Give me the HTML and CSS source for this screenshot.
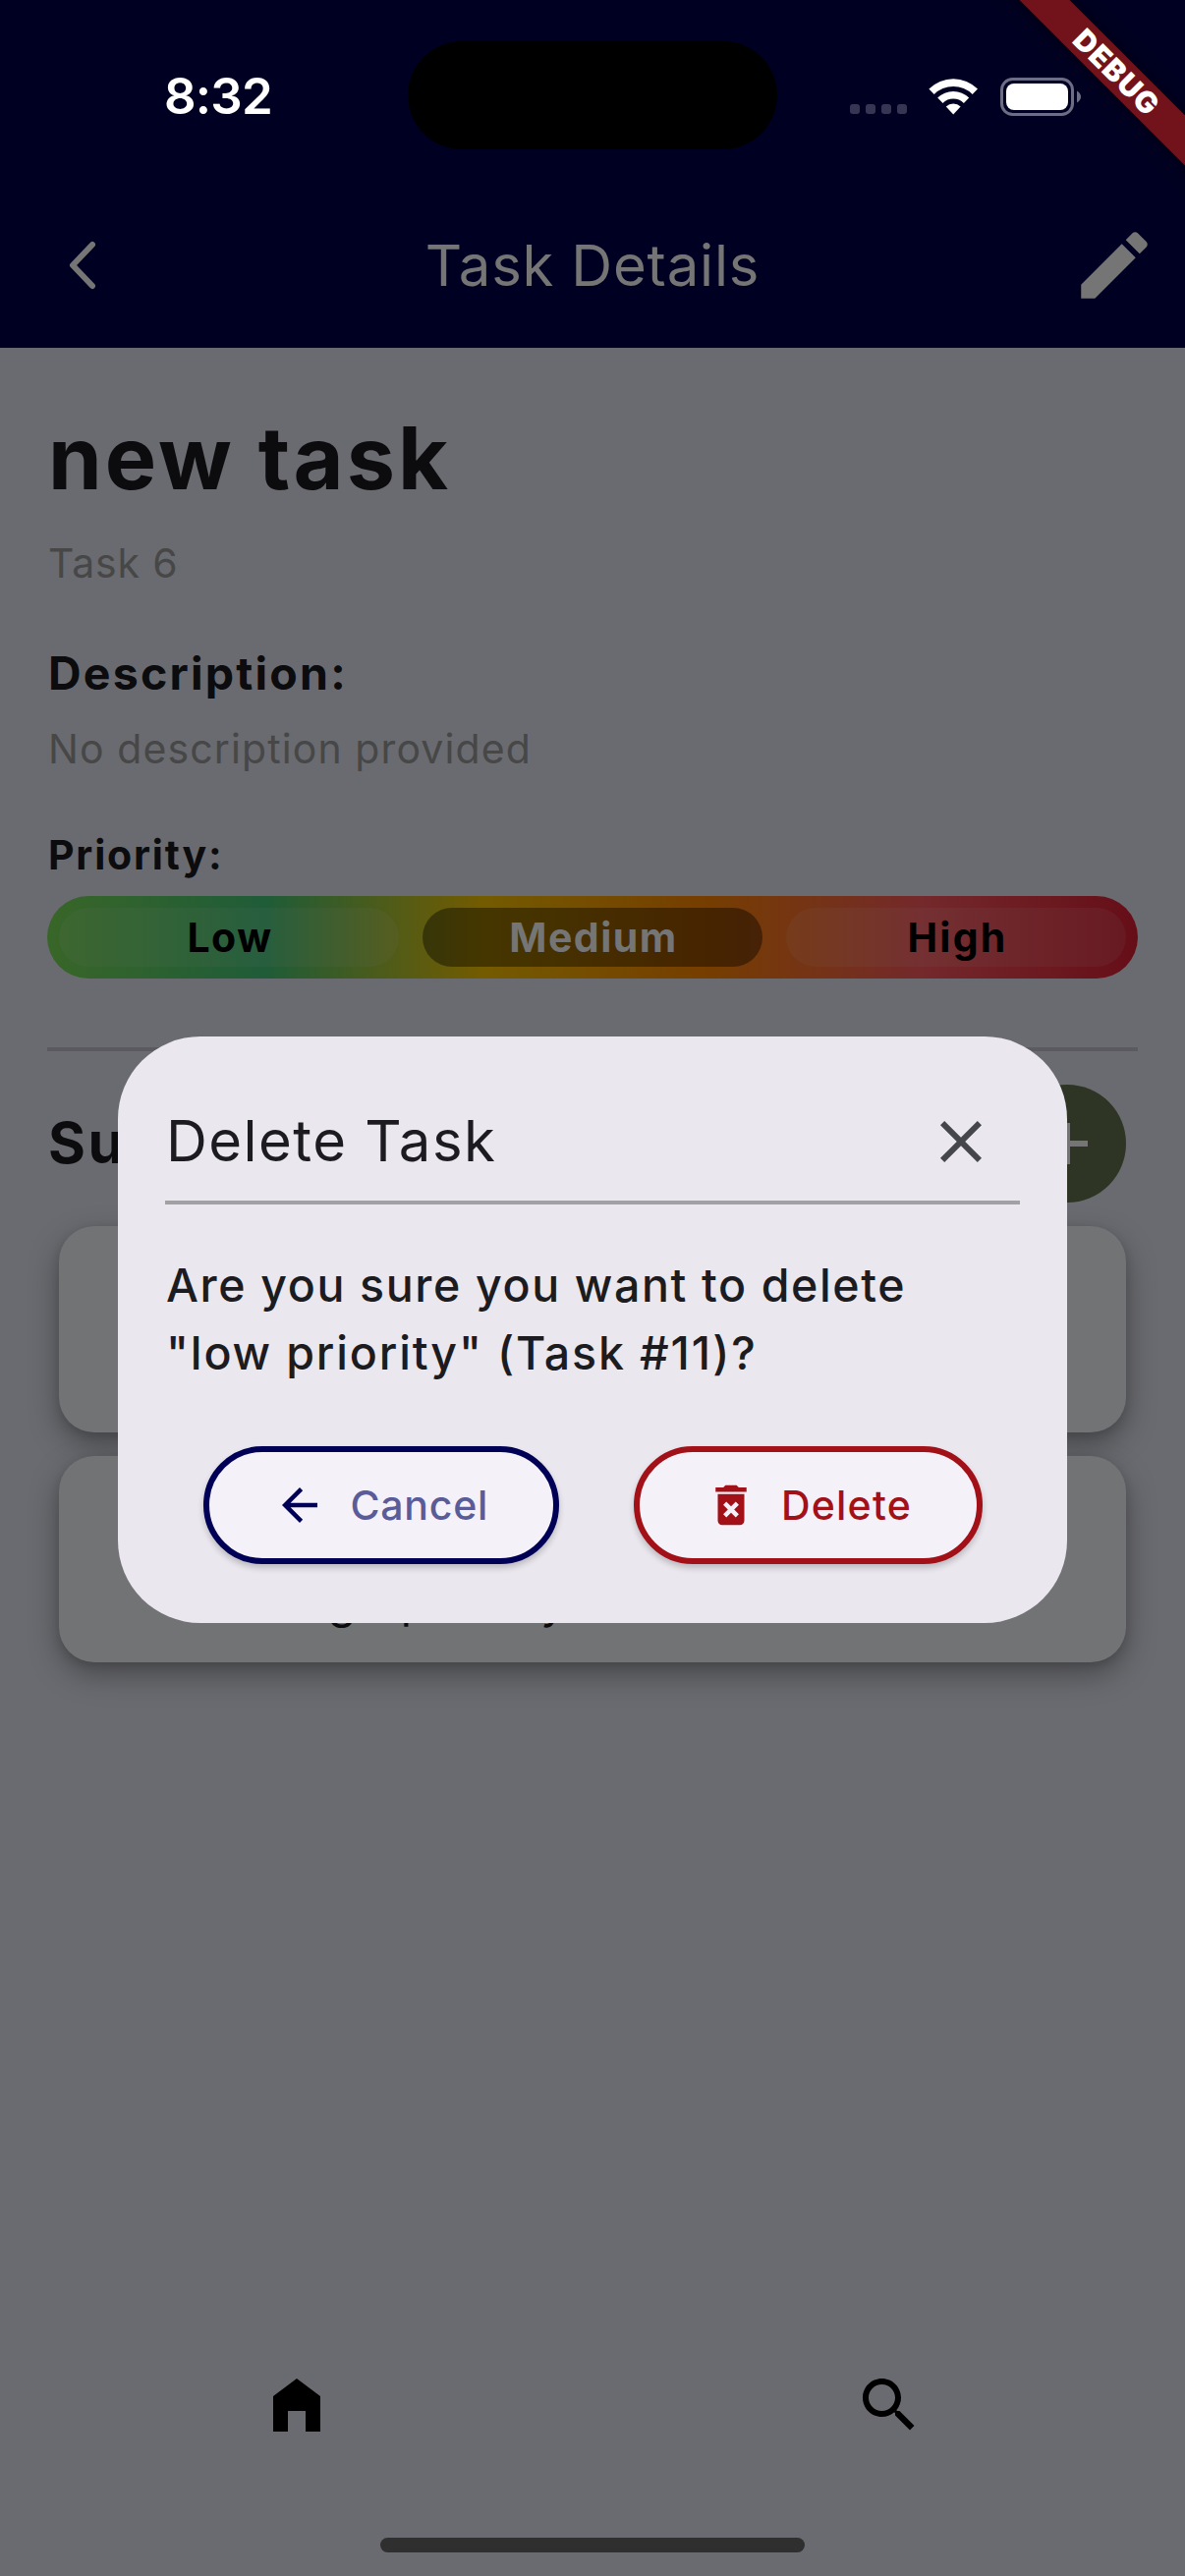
FILE: index.html
```html
<!DOCTYPE html>
<html lang="en">
<head>
<meta charset="utf-8">
<title>Task Details</title>
<link rel="stylesheet" href="styles.css">
</head>
<body>
<div class="screen">
  <header class="header">
    <div class="status">
      <span class="time">8:32</span>
      <span class="island"></span>
      <span class="indicators">
        <span class="signal"><i></i><i></i><i></i><i></i></span>
        <svg class="wifi" viewBox="0 0 51 37" width="51" height="37" fill="#fff">
          <path d="M.4 10.6A35 35 0 0 1 50 10.6L44.7 16A27.6 27.6 0 0 0 5.7 16Z"/>
          <path d="M9.2 19.6A22.6 22.6 0 0 1 41.2 19.6L35.9 24.9A15.2 15.2 0 0 0 14.5 24.9Z"/>
          <path d="M17.8 28.6A10.4 10.4 0 0 1 32.6 28.6L25.2 36.5Z"/>
        </svg>
        <svg class="battery" viewBox="0 0 82 39" width="82" height="39">
          <rect x="1.5" y="1.5" width="72" height="36" rx="11" fill="none" stroke="#6d6d86" stroke-width="3"/>
          <rect x="6" y="6" width="63" height="27" rx="8" fill="#fff"/>
          <path d="M78 13.500Q82 16 82 19.500Q82 23 78 25.500Z" fill="#6d6d86"/>
        </svg>
      </span>
    </div>
    <div class="appbar">
      <svg class="back" viewBox="0 0 34 54" width="34" height="54"><path d="M27 6L7 27L27 48" fill="none" stroke="#757575" stroke-width="6" stroke-linecap="round" stroke-linejoin="round"/></svg>
      <h1 class="appbar-title">Task Details</h1>
      <svg class="edit" viewBox="0 0 24 24" width="90" height="90" fill="#757575"><path d="M3 17.250V21h3.750L17.810 9.940l-3.750-3.750L3 17.250zM20.710 7.040c.390-.390.390-1.020 0-1.410l-2.340-2.340c-.390-.390-1.020-.390-1.410 0l-1.830 1.830 3.750 3.750 1.830-1.830z"/></svg>
    </div>
  </header>

  <main class="content">
    <h2 class="task-name">new task</h2>
    <p class="task-id">Task 6</p>
    <h3 class="label">Description:</h3>
    <p class="description">No description provided</p>
    <h4 class="priority-label">Priority:</h4>
    <div class="priority">
      <span class="level low">Low</span>
      <span class="level medium">Medium</span>
      <span class="level high">High</span>
    </div>
    <div class="divider"></div>
    <div class="subtasks-head">
      <h3 class="subtasks-title">Su</h3>
      <span class="add"><svg viewBox="0 0 24 24" width="72" height="72" fill="#757575"><path d="M19 13h-6v6h-2v-6H5v-2h6V5h2v6h6v2z"/></svg></span>
    </div>
    <div class="cards">
      <div class="card"></div>
      <div class="card"><span class="card-text">high priority</span></div>
    </div>
  </main>

  <nav class="nav">
    <svg viewBox="0 0 24 24" width="72" height="72"><path d="M4 21V9l8-6 8 6v12h-5v-7H9v7z"/></svg>
    <svg viewBox="0 0 24 24" width="72" height="72"><path d="M15.500 14h-.790l-.280-.270C15.410 12.590 16 11.110 16 9.500 16 5.910 13.090 3 9.500 3S3 5.910 3 9.500 5.910 16 9.500 16c1.610 0 3.090-.590 4.230-1.570l.270.280v.790l5 4.990L20.490 19l-4.990-5zm-6 0C7.010 14 5 11.990 5 9.500S7.010 5 9.500 5 14 7.010 14 9.500 11.990 14 9.500 14z"/></svg>
  </nav>
  <div class="home-indicator"></div>

  <section class="dialog">
    <div class="dialog-head">
      <h2 class="dialog-title">Delete Task</h2>
      <svg class="close" viewBox="0 0 24 24" width="72" height="72" fill="#45464c"><path d="M19 6.410L17.590 5 12 10.590 6.410 5 5 6.410 10.590 12 5 17.590 6.410 19 12 13.410 17.590 19 19 17.590 13.410 12z"/></svg>
    </div>
    <div class="dialog-rule"></div>
    <p class="dialog-text"><span class="line">Are you sure you want to delete</span><br><span class="line second">"low priority" (Task #11)?</span></p>
    <div class="actions">
      <button class="button cancel">
        <svg viewBox="0 0 24 24" width="54" height="54" fill="#000056"><path d="M20 11H7.830l5.590-5.590L12 4l-8 8 8 8 1.410-1.410L7.830 13H20v-2z"/></svg>
        <span>Cancel</span>
      </button>
      <button class="button delete">
        <svg viewBox="0 0 24 24" width="54" height="54" fill="#a21018"><path d="M6 19c0 1.100.900 2 2 2h8c1.100 0 2-.900 2-2V7H6v12zm2.460-7.120l1.410-1.410L12 12.590l2.120-2.120 1.410 1.410L13.410 14l2.120 2.120-1.410 1.410L12 15.410l-2.120 2.120-1.410-1.410L10.590 14l-2.130-2.120zM15.500 4l-1-1h-5l-1 1H5v2h14V4z"/></svg>
        <span>Delete</span>
      </button>
    </div>
  </section>

  <div class="debug">DEBUG</div>
</div>
</body>
</html>
```
FILE: styles.css
```css
* { box-sizing: border-box; }
body {
  margin: 0;
  font-family: Inter, "Liberation Sans", sans-serif;
  background: #6a6b70;
}
h1, h2, h3, h4, p { margin: 0; font-weight: 400; }
svg { display: block; flex: none; }
.screen {
  position: relative;
  display: flex;
  flex-direction: column;
  width: 1206px;
  height: 2622px;
  overflow: hidden;
  background: #6a6b70;
}

/* Header */
.header { height: 354px; background: #000022; }
.status {
  display: grid;
  grid-template-columns: 415px 376px 1fr;
  align-items: center;
  height: 186px;
  padding-top: 10px;
}
.time {
  padding-left: 167px;
  font-size: 51px;
  font-weight: 600;
  line-height: 60px;
  letter-spacing: -0.8px;
  color: #fff;
}
.island { height: 110px; margin-bottom: 2px; border-radius: 55px; background: #000; }
.indicators { display: flex; align-items: center; padding-left: 74px; }
.signal { display: flex; gap: 6px; margin-top: 26px; }
.signal i { width: 10px; height: 10px; border-radius: 3px; background: #363553; }
.wifi { margin-left: 22px; }
.battery { margin-left: 22px; }
.appbar {
  display: grid;
  grid-template-columns: 1fr auto 1fr;
  align-items: center;
  height: 168px;
  padding: 0 27px;
}
.back { margin-left: 40px; }
.appbar-title { font-size: 58px; line-height: 70px; letter-spacing: 0.8px; color: #757575; }
.edit { justify-self: end; }

/* Content */
.content { flex: 1; padding: 58px 48px 0; }
.task-name {
  padding-left: 1px;
  font-size: 88px;
  font-weight: 700;
  line-height: 108px;
  letter-spacing: 3.05px;
  color: #0c0c0e;
}
.task-id, .description { font-size: 41px; line-height: 60px; color: #474747; }
.task-id { margin-top: 23px; padding-left: 1px; letter-spacing: 0.8px; }
.label {
  margin-top: 48px;
  padding-left: 1px;
  font-size: 46.5px;
  font-weight: 700;
  line-height: 68px;
  letter-spacing: 2.2px;
  color: #0c0c0e;
}
.description { margin-top: 13px; padding-left: 1px; letter-spacing: 1.1px; }
.priority-label {
  margin-top: 48px;
  padding-left: 1px;
  font-size: 41px;
  font-weight: 700;
  line-height: 60px;
  letter-spacing: 1.8px;
  color: #0c0c0e;
}
.priority {
  display: grid;
  grid-template-columns: repeat(3, 1fr);
  gap: 24px;
  height: 84px;
  margin-top: 12px;
  padding: 12px;
  border-radius: 42px;
  background: linear-gradient(90deg, #396628, #1f5c38 20%, #745b00 40%, #763e00 60%, #74292b 80%, #660e18);
}
.level {
  display: flex;
  justify-content: center;
  padding-left: 2px;
  border-radius: 30px;
  background: rgba(117, 117, 117, 0.1);
  font-size: 41px;
  font-weight: 700;
  line-height: 60px;
  letter-spacing: 1.5px;
  color: #000;
}
.medium { background: rgba(0, 0, 0, 0.4); color: #757575; }
.high { padding-left: 3px; letter-spacing: 2.2px; }
.divider { height: 4px; margin-top: 70px; background: #5b5a60; }
.subtasks-head {
  display: flex;
  justify-content: space-between;
  align-items: center;
  height: 120px;
  margin: 34px 12px 0 0;
}
.subtasks-title {
  padding: 0 0 3px 1px;
  font-size: 58px;
  font-weight: 700;
  line-height: 70px;
  letter-spacing: 2.5px;
  color: #0c0c0e;
}
.add {
  display: grid;
  place-items: center;
  width: 120px;
  height: 120px;
  border-radius: 50%;
  background: #2e3524;
}
.cards { display: flex; flex-direction: column; gap: 24px; margin: 24px 12px 0; }
.card {
  display: flex;
  align-items: flex-end;
  height: 210px;
  padding: 0 0 32px 232px;
  border-radius: 36px;
  background: #727375;
  box-shadow: 0 12px 30px rgba(0, 0, 0, 0.34), 0 3px 10px rgba(0, 0, 0, 0.1);
}
.card-text { font-size: 46px; line-height: 60px; letter-spacing: 1.8px; color: #0c0c0e; }

/* Bottom navigation */
.nav {
  display: grid;
  grid-template-columns: 1fr 1fr;
  justify-items: center;
  height: 171px;
}
.home-indicator {
  width: 432px;
  height: 15px;
  margin: 0 auto 24px;
  border-radius: 8px;
  background: #2f2f2f;
}

/* Confirmation dialog */
.dialog {
  position: absolute;
  top: 1054.5px;
  left: 120px;
  width: 966px;
  height: 597px;
  padding: 48px;
  border-radius: 84px;
  background: #eae7ee;
  color: #1c1b20;
}
.dialog-head {
  display: flex;
  justify-content: space-between;
  align-items: center;
  height: 119.5px;
  padding-right: 24px;
}
.dialog-title { padding: 0 0 3px 1px; font-size: 58px; line-height: 70px; letter-spacing: 1.45px; }
.dialog-rule { height: 4px; background: #a2a1a3; }
.dialog-text {
  margin-top: 47.5px;
  font-size: 46.5px;
  font-weight: 500;
  line-height: 69px;
  letter-spacing: 1.62px;
  white-space: nowrap;
}
.line { margin-left: 1px; }
.second { letter-spacing: 1.85px; }
.actions { display: flex; justify-content: center; gap: 76px; margin-top: 60px; }
.button {
  display: flex;
  align-items: center;
  gap: 24px;
  height: 120px;
  padding: 0 0 0 66px;
  border: 6px solid;
  border-radius: 60px;
  background: #f5f1f8;
  box-shadow: 0 4px 6px rgba(0, 0, 0, 0.2);
  font: 500 41px/60px Inter, "Liberation Sans", sans-serif;
}
.cancel { width: 362.5px; padding-left: 65px; gap: 25px; border-color: #000056; letter-spacing: 0.75px; color: #5a5c99; }
.delete { width: 354.5px; border-color: #a21018; letter-spacing: 1.2px; color: #a21018; }

/* Corner ribbon */
.debug {
  position: absolute;
  top: 53px;
  left: 934px;
  width: 400px;
  height: 36px;
  padding-left: 7px;
  transform: rotate(45deg);
  background: #72131b;
  box-shadow: 0 0 18px rgba(0, 0, 0, 0.5);
  font-size: 30px;
  font-weight: 900;
  line-height: 36px;
  letter-spacing: 1px;
  text-align: center;
  color: #fff;
}
```
